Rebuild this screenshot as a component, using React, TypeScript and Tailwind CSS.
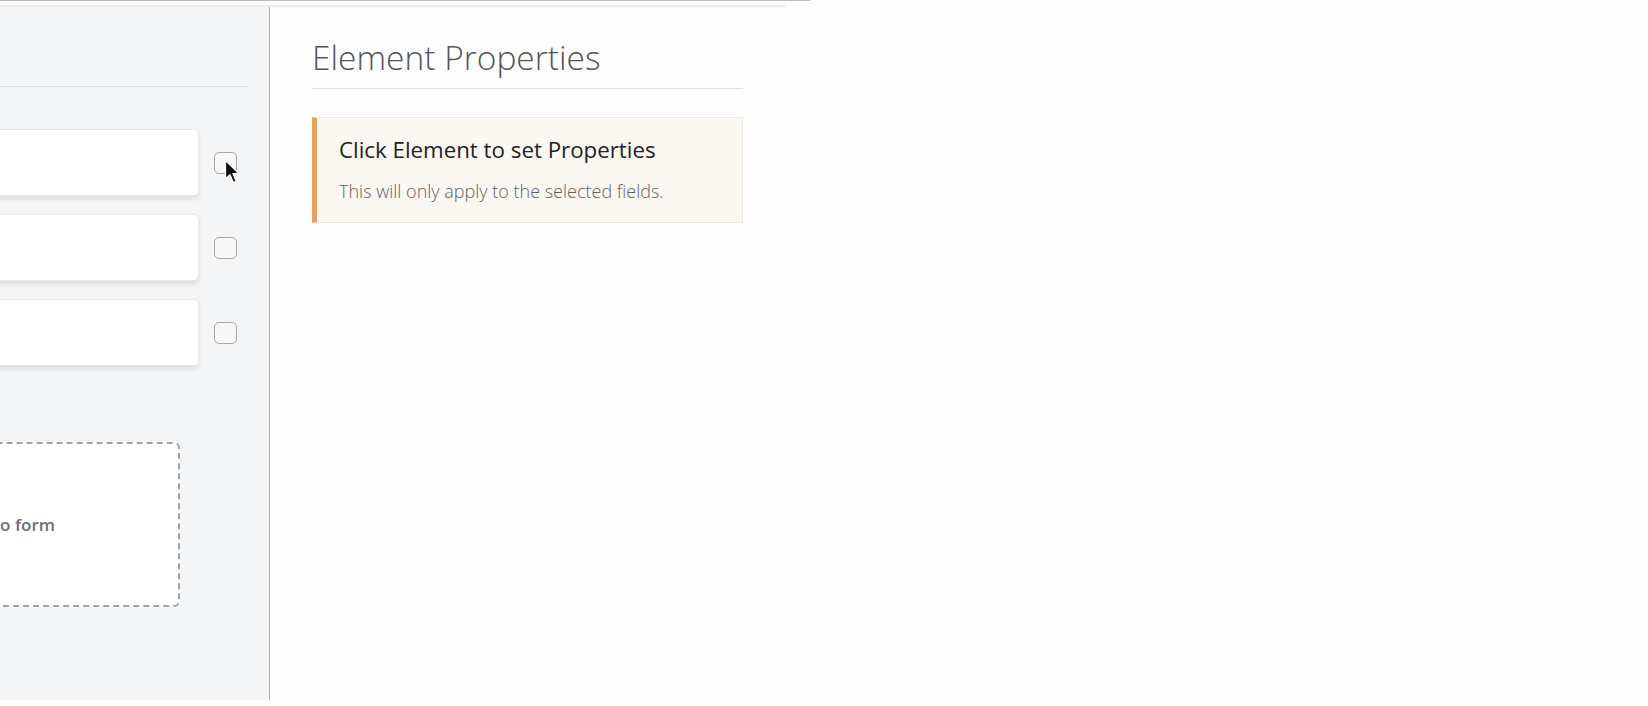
export default function App() {
  const rows = [0, 1, 2]

  return (
    <div className="relative h-[706px] w-[1648px] overflow-hidden bg-[#fdfdfd] font-['Open_Sans',sans-serif]">
      {/* top rules */}
      <div className="h-px w-[811px] bg-[#bdbdbd]" />
      <div className="mt-[4px] h-[2px] w-[785px] bg-[#ebebeb]" />

      <div className="flex">
        {/* Form builder canvas (cut off on the left) */}
        <aside className="flex h-[693px] w-[270px] shrink-0 flex-col items-end overflow-hidden border-r border-[#a9afb6] bg-[#f3f5f7] pr-[21px]">
          <div className="h-[80px] w-full border-b border-[#dde1e5]" />

          <div className="mt-[42px] flex flex-col items-end gap-[18px] pr-[11px]">
            {rows.map((r) => (
              <div key={r} className="flex items-center gap-[15px]">
                <div className="h-[67px] w-[420px] shrink-0 rounded-[5px] border border-[#e6e9ec] bg-white shadow-[0_3px_5px_rgba(0,0,0,0.10)]" />
                <div className="h-[22px] w-[23px] shrink-0 rounded-[5px] border-[1.5px] border-[#a8a8a8] bg-[#f7f8f9]" />
              </div>
            ))}
          </div>

          <div className="mt-[76px] mr-[68px] flex h-[165px] w-[520px] shrink-0 items-center justify-end rounded-[6px] border-2 border-dashed border-[#9ea3a8] bg-white pr-[123px]">
            <span className="text-[17px] font-semibold whitespace-nowrap text-[#6b6e72]">
              Drag elements here to add to form
            </span>
          </div>
        </aside>

        {/* Properties panel */}
        <main className="ml-[42px] w-[431px] pt-[28px]">
          <h2 className="text-[33.5px] leading-[44px] font-light text-[#555]">Element Properties</h2>
          <div className="mt-[9px] h-px bg-[#e2e2e2]" />

          <div className="mt-[28px] h-[106px] border border-l-[5px] border-[#ece7e0] border-l-[#e9a25e] bg-[#fbf7f2] pt-[17px] pl-[22px]">
            <h3 className="text-[22.3px] leading-[30px] text-[#222]">Click Element to set Properties</h3>
            <p className="mt-[14px] text-[18px] leading-[25px] font-light text-[#626262]">
              This will only apply to the selected fields.
            </p>
          </div>
        </main>
      </div>

      {/* mouse pointer */}
      <svg className="absolute top-[159px] left-[224px]" width="17" height="26" viewBox="0 0 14 22">
        <path
          d="M1 1 L1 17 L4.8 13.4 L7.6 20 L10.2 18.9 L7.5 12.5 L12.6 12.5 Z"
          fill="#111"
          stroke="#fff"
          strokeWidth="1.2"
          strokeLinejoin="round"
        />
      </svg>
    </div>
  )
}
